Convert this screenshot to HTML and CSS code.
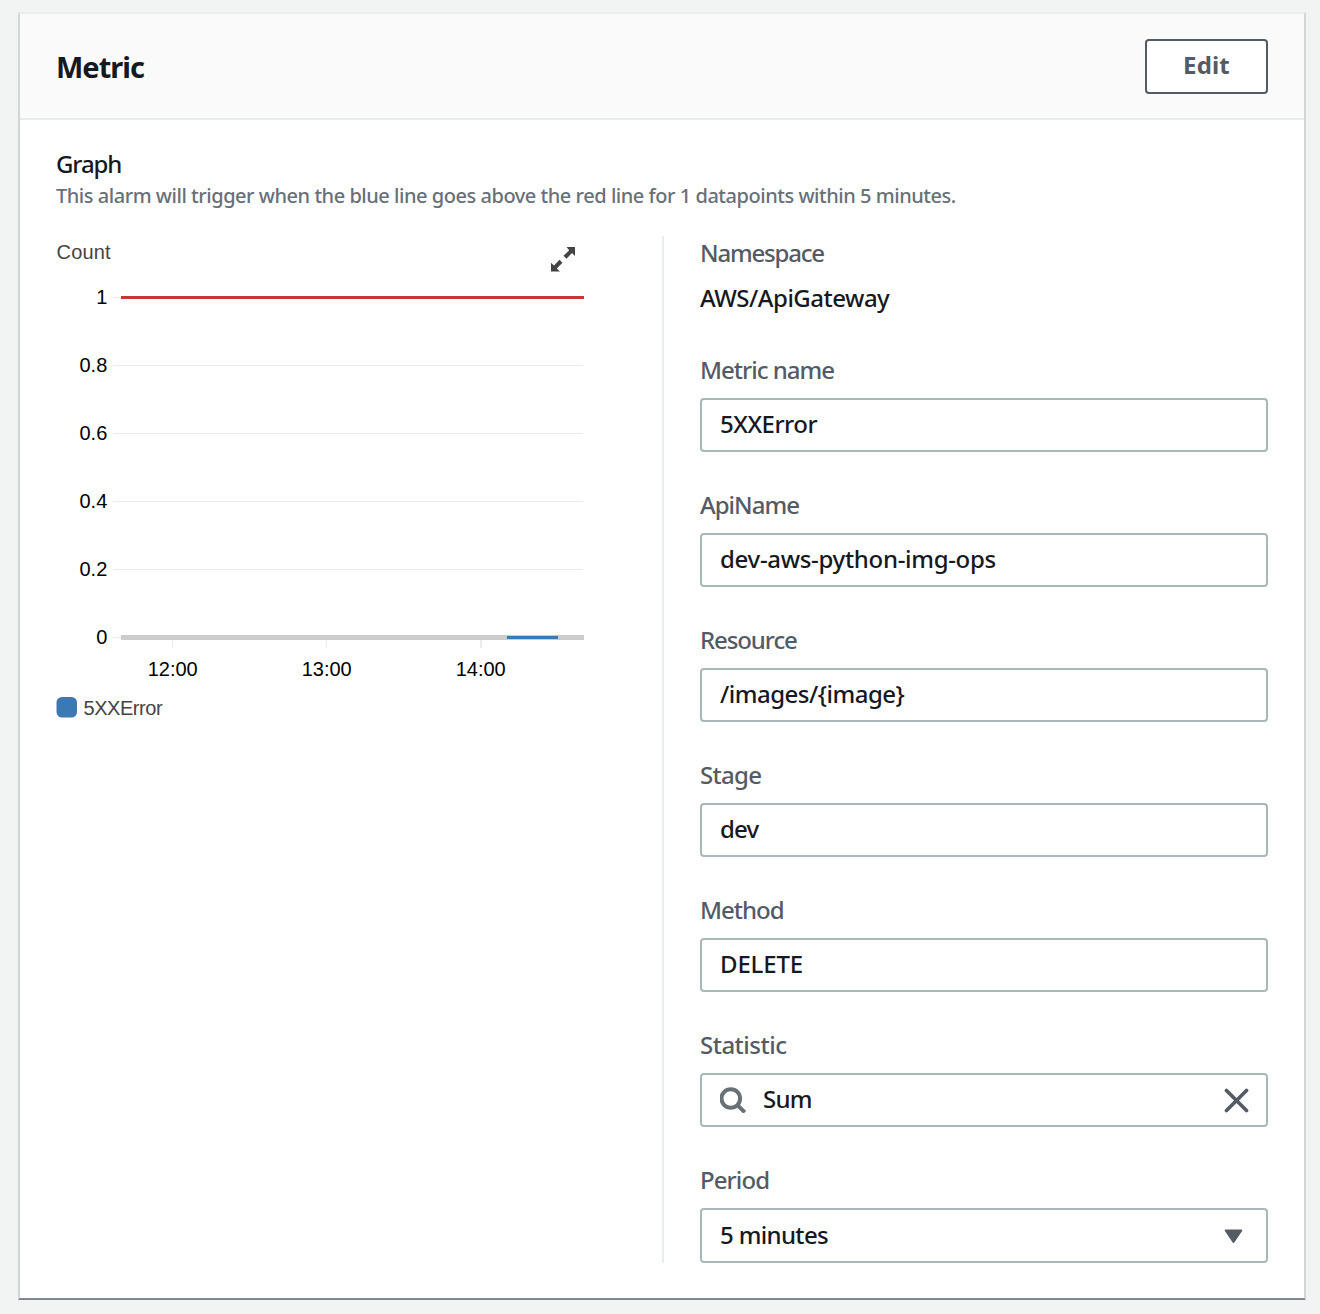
FILE: index.html
```html
<!DOCTYPE html>
<html lang="en">
<head>
<meta charset="utf-8">
<title>Metric</title>
<link rel="stylesheet" href="styles.css">
</head>
<body>
<section class="card">
  <header class="card-header">
    <h2 class="card-title">Metric</h2>
    <button class="edit-button" type="button">Edit</button>
  </header>
  <div class="card-body">
    <h3 class="graph-title">Graph</h3>
    <p class="graph-description">This alarm will trigger when the blue line goes above the red line for 1 datapoints within 5 minutes.</p>
    <div class="columns">
      <div class="graph">
        <svg class="chart" width="544" height="490" viewBox="56 236 544 490">
          <g class="muted"><text class="unit-text" x="56.5" y="259">Count</text><text class="legend-text" x="83.5" y="715">5XXError</text></g>
          <g class="expand">
            <path d="M566.500 247H575V256L572 253L566.500 258.700L563.500 255.700L569.200 250.200Z"/>
            <path d="M559.500 259.700L562.500 262.700L556.800 268.500L560 271.500H551V262.700L554 265.500Z"/>
          </g>
          <g class="grid">
            <path d="M113 297.500H583M113 365.500H583M113 433.500H583M113 501.500H583M113 569.500H583M113 637.500H583"/>
            <path d="M172.500 640V648M326.500 640V648"/><path class="wide-tick" d="M481 640V648"/>
          </g>
          <rect class="baseline" x="121" y="635" width="463" height="5"/>
          <rect class="series" x="507" y="636" width="51" height="3"/>
          <rect class="threshold" x="121" y="296" width="463" height="3"/>
          <g class="y-labels">
            <text x="107.3" y="304">1</text><text x="107.3" y="372">0.8</text><text x="107.3" y="440">0.6</text>
            <text x="107.3" y="508">0.4</text><text x="107.3" y="576">0.2</text><text x="107.3" y="644">0</text>
          </g>
          <g class="x-labels">
            <text x="172.700" y="676">12:00</text><text x="326.700" y="676">13:00</text><text x="480.700" y="676">14:00</text>
          </g>
          <rect class="series" x="56.500" y="697" width="20.500" height="20.500" rx="5.500"/>
        </svg>
      </div>
      <div class="fields">
        <div class="field namespace"><div class="label">Namespace</div><div class="value">AWS/ApiGateway</div></div>
        <div class="field metric-name"><div class="label">Metric name</div><div class="input">5XXError</div></div>
        <div class="field api-name"><div class="label">ApiName</div><div class="input">dev-aws-python-img-ops</div></div>
        <div class="field resource"><div class="label">Resource</div><div class="input">/images/{image}</div></div>
        <div class="field stage"><div class="label">Stage</div><div class="input">dev</div></div>
        <div class="field method"><div class="label">Method</div><div class="input">DELETE</div></div>
        <div class="field statistic"><div class="label">Statistic</div>
          <div class="input">
            <svg class="search-icon" width="28" height="28" viewBox="0 0 28 28"><circle cx="10.800" cy="13.500" r="9.300"/><path d="M17.200 19.800L24.800 27.300"/></svg>
            Sum
            <svg class="clear-icon" width="26" height="28" viewBox="0 0 26 28"><path d="M2.500 5.500L22.500 25.500M22.500 5.500L2.500 25.500"/></svg>
          </div></div>
        <div class="field period"><div class="label">Period</div>
          <div class="input select">5 minutes
            <svg class="caret-icon" width="20" height="18" viewBox="0 0 20 18"><path d="M1.700 4.500H17.300L9.500 16Z"/></svg>
          </div></div>
      </div>
    </div>
  </div>
</section>
</body>
</html>
```
FILE: styles.css
```css
* { box-sizing: border-box; }
body {
  margin: 0;
  min-height: 1314px;
  padding: 12px 14px 14px 18px;
  background: #f2f4f3;
  color: #16191f;
  font: 500 24px/24px "Noto Sans", "Open Sans", sans-serif;
}
h2, h3, p { margin: 0; }
.card {
  width: 1288px;
  background: #fff;
  border: 2px solid #d2d5d5;
  border-top-color: #eaeded;
  border-bottom-color: #7f898d;
}
.card-header {
  display: flex;
  align-items: center;
  justify-content: space-between;
  height: 106px;
  padding: 0 36px;
  background: #fafafa;
  border-bottom: 2px solid #eaeded;
}
.card-title {
  padding-top: 2px;
  font-size: 29px;
  font-weight: 700;
  line-height: 40px;
  letter-spacing: -1px;
}
.edit-button {
  width: 123px;
  height: 55px;
  padding: 0 0 2px;
  border: 2px solid #545b64;
  border-radius: 4px;
  background: #fff;
  color: #545b64;
  font: 700 24px/24px "Noto Sans", "Open Sans", sans-serif;
  letter-spacing: 0.15px;
}
.card-body { padding: 32px 36px 35px; }
.graph-title { font-size: 24px; font-weight: 500; line-height: 24px; letter-spacing: -1.1px; }
.graph-description {
  margin-top: 8px;
  color: #687078;
  font-size: 20px;
  line-height: 24px;
  letter-spacing: -0.465px;
  white-space: nowrap;
}
.columns { display: grid; grid-template-columns: 606px 606px; margin-top: 28px; }
.chart { display: block; font-family: "Liberation Sans", Arial, sans-serif; font-size: 20px; font-weight: 400; }
.muted, .expand { fill: #444; }
.unit-text { letter-spacing: 0.2px; }
.legend-text { letter-spacing: -0.45px; }
.grid { stroke: #ebebeb; fill: none; }
.wide-tick { stroke-width: 2; }
.baseline { fill: #ccc; }
.series { fill: #3c78b3; }
.threshold { fill: #c53932; }
.y-labels { text-anchor: end; }
.x-labels { text-anchor: middle; }
.fields {
  display: flex;
  flex-direction: column;
  gap: 41px;
  padding: 5px 0 0 36px;
  border-left: 2px solid #eaeded;
}
.label { margin-bottom: 16px; color: #545b64; letter-spacing: -1px; }
.value { height: 36px; line-height: 34px; letter-spacing: -0.5px; }
.input {
  display: flex;
  align-items: center;
  height: 54px;
  padding: 0 16px 2px 18px;
  border: 2px solid #aab7b8;
  border-radius: 4px;
  letter-spacing: -0.5px;
}
.namespace .label { letter-spacing: -1.2px; }
.resource .label { letter-spacing: -1.1px; }
.stage .label { letter-spacing: -0.7px; }
.statistic .label { letter-spacing: -0.5px; }
.period .label { letter-spacing: -0.9px; }
.api-name .input { letter-spacing: -0.31px; }
.stage .input, .statistic .input { letter-spacing: -0.8px; }
.method .input { letter-spacing: -0.15px; }
.period .input { letter-spacing: -0.65px; }
.select { height: 55px; padding-right: 22px; }
.search-icon { margin-right: 15px; fill: none; stroke: #687078; stroke-width: 4; }
.clear-icon, .caret-icon { margin-left: auto; }
.clear-icon { fill: none; stroke: #545b64; stroke-width: 3.7; stroke-linecap: round; }
.caret-icon { fill: #545b64; stroke: #545b64; stroke-width: 2; stroke-linejoin: round; }
```
